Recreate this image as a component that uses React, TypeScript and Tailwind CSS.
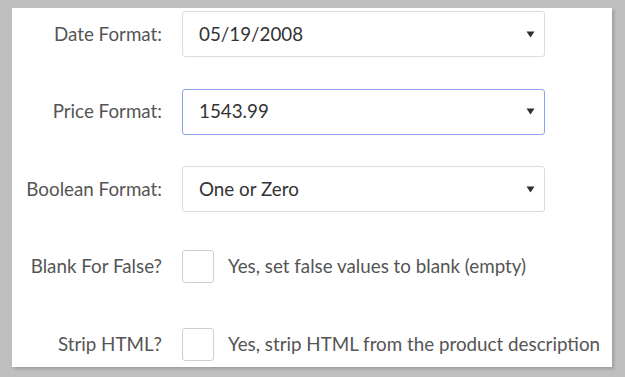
import React from "react";

const font = { fontFamily: "Lato, 'Noto Sans', sans-serif" };

function Arrow() {
  return (
    <svg width="9" height="7" viewBox="0 0 9 7" className="shrink-0">
      <path d="M0.5 0.5 H8.5 L4.5 6.5 Z" fill="#2e2e36" />
    </svg>
  );
}

function SelectBox({ value, focused }: { value: string; focused?: boolean }) {
  return (
    <div
      className={
        "flex h-[46px] w-[363px] items-center justify-between rounded-[3px] border bg-white pl-[16px] pr-[9px] text-[18.8px] text-[#333] " +
        (focused ? "border-[#8ea2f2]" : "border-[#dcdcdc]")
      }
    >
      <span>{value}</span>
      <Arrow />
    </div>
  );
}

function Row({ label, children }: { label: string; children: React.ReactNode }) {
  return (
    <div className="flex h-[46px] items-center">
      <div className="w-[150px] whitespace-nowrap text-right text-[18.8px] text-[#555]">{label}</div>
      <div className="ml-[20px] flex items-center">{children}</div>
    </div>
  );
}

function Check({ text }: { text: string }) {
  return (
    <div className="flex items-center">
      <div className="h-[33px] w-[32px] rounded-[3px] border border-[#cfcfcf] bg-white" />
      <span className="ml-[14px] whitespace-nowrap text-[18.8px] text-[#555]">{text}</span>
    </div>
  );
}

export default function App() {
  return (
    <div className="h-[377px] w-[625px] bg-[#bfbfbf] pl-[12px] pt-[8px]" style={font}>
      <div className="flex h-[359px] w-[600px] flex-col gap-[31.5px] bg-white pt-[3px] shadow-[2px_2px_3px_rgba(0,0,0,0.18)]">
        <Row label="Date Format:">
          <SelectBox value="05/19/2008" />
        </Row>
        <Row label="Price Format:">
          <SelectBox value="1543.99" focused />
        </Row>
        <Row label="Boolean Format:">
          <SelectBox value="One or Zero" />
        </Row>
        <Row label="Blank For False?">
          <Check text="Yes, set false values to blank (empty)" />
        </Row>
        <Row label="Strip HTML?">
          <Check text="Yes, strip HTML from the product description" />
        </Row>
      </div>
    </div>
  );
}
